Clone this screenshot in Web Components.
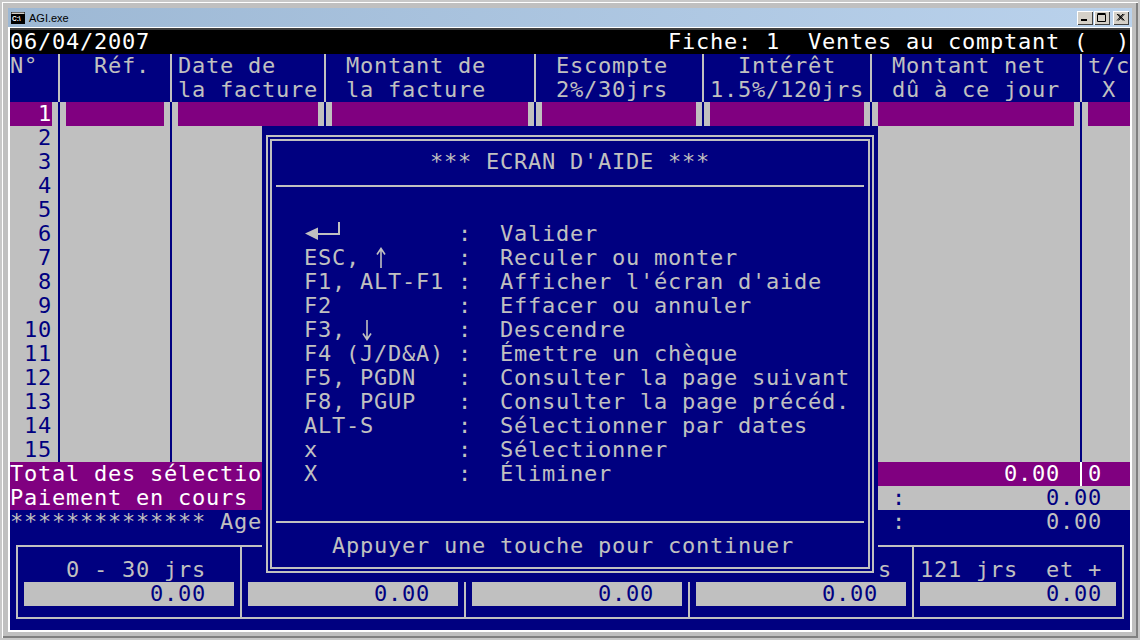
<!DOCTYPE html>
<html lang="fr">
<head>
<meta charset="utf-8">
<title>AGI.exe</title>
<style>
  html, body { margin: 0; padding: 0; background: #c0c0c0; }
</style>
</head>
<body>
<dos-window caption="AGI.exe">
  <dos-console>
    <con-line tone="black">
      <span>06/04/2007</span>
      <span slot="right">Fiche: 1  Ventes au comptant (  )</span>
    </con-line>
    <ledger-table></ledger-table>
    <con-line tone="purple">
      <span>Total des sélectio</span>
      <span slot="right">0.00 </span>
      <con-sep slot="right"></con-sep>
      <span slot="right">0  </span>
    </con-line>
    <con-line tone="grey">
      <con-block>Paiement en cours</con-block>
      <span slot="right">:          0.00  </span>
    </con-line>
    <con-line tone="navy">
      <span>************** Age</span>
      <span slot="right">:          0.00  </span>
    </con-line>
    <age-table></age-table>
    <help-dialog></help-dialog>
  </dos-console>
</dos-window>

<script>
// Outer Windows frame with the title bar
class DosWindow extends HTMLElement {
  constructor() {
    super();
    this.attachShadow({ mode: "open" });
    this.shadowRoot.innerHTML = `
      <style>
        :host {
          display: block;
          box-sizing: border-box;
          width: 1140px;
          height: 640px;
          padding: 6px;
          border: 2px solid #c8c8c8;
          background: #c0c0c0;
          box-shadow: inset 1px 1px 0 #fff, inset -2px -2px 0 #808080;
          font: 11px "Liberation Sans", sans-serif;
        }
        .bar {
          display: flex;
          align-items: center;
          height: 19px;
          padding: 0 3px;
          background: linear-gradient(90deg, #9db8d4, #bad2ec);
          color: #000;
        }
        .bar svg.app { margin-right: 4px; }
        .bar span { flex: 1; }
        .btns { display: flex; }
        .btns button {
          box-sizing: border-box;
          width: 16px;
          height: 14px;
          padding: 0;
          border: 0;
          background: #d4d0c8;
          box-shadow: inset 1px 1px 0 #fff, inset -1px -1px 0 #404040;
          display: flex;
          align-items: center;
          justify-content: center;
        }
        .btns button + button { margin-left: 1px; }
        .btns button:last-child { margin-left: 3px; }
        .client {
          box-sizing: border-box;
          height: 605px;
          padding-top: 2px;
          border: 2px solid #fff;
          border-top-width: 1px;
          background: #404040;
        }
      </style>
      <div class="bar">
        <svg class="app" width="14" height="12" viewBox="0 0 14 12">
          <rect width="14" height="12" fill="#000"/>
          <rect x="0.5" y="0.5" width="13" height="1.5" fill="#d4d0c8"/>
          <text x="1" y="9" font-family="Liberation Sans" font-size="6.5" font-weight="700" fill="#fff">C:\\</text>
        </svg>
        <span></span>
        <div class="btns">
          <button><svg width="10" height="9" viewBox="0 0 10 9"><rect x="1" y="6" width="6" height="2" fill="#000"/></svg></button>
          <button><svg width="10" height="9" viewBox="0 0 10 9"><path d="M.5 1.5h8v7h-8z M.5.5h8" fill="none" stroke="#000"/></svg></button>
          <button><svg width="10" height="9" viewBox="0 0 10 9"><path d="M1 1l6 6.5M2.4 1l6 6.5M7 1L1 7.5M8.4 1l-6 6.5" fill="none" stroke="#000"/></svg></button>
        </div>
      </div>
      <div class="client"><slot></slot></div>
    `;
  }

  connectedCallback() {
    this.shadowRoot.querySelector(".bar span").textContent = this.getAttribute("caption");
  }
}

// 80x25 text screen, each cell is 14x24
class DosConsole extends HTMLElement {
  constructor() {
    super();
    this.attachShadow({ mode: "open" });
    this.shadowRoot.innerHTML = `
      <style>
        :host {
          display: block;
          position: relative;
          width: 1120px;
          height: 600px;
          background: #000080;
          color: #c0c0c0;
          font: 22px/24px "DejaVu Sans Mono", monospace;
          letter-spacing: 0.756px;
          overflow: hidden;
        }
      </style>
      <slot></slot>
    `;
  }
}

// One text line, left part and right part
class ConLine extends HTMLElement {
  constructor() {
    super();
    this.attachShadow({ mode: "open" });
    this.shadowRoot.innerHTML = `
      <style>
        :host {
          display: flex;
          justify-content: space-between;
          height: 24px;
        }
        :host([tone="black"]) { background: #000; color: #fff; }
        :host([tone="purple"]) { background: #800080; color: #fff; }
        :host([tone="grey"]) { background: #c0c0c0; color: #000080; }
        :host([tone="navy"]) { background: #000080; color: #c0c0c0; }
        .right { display: flex; }
        ::slotted(span) { white-space: pre; }
      </style>
      <div class="left"><slot></slot></div>
      <div class="right"><slot name="right"></slot></div>
    `;
  }
}

// Purple block on a grey line (18 columns)
class ConBlock extends HTMLElement {
  constructor() {
    super();
    this.attachShadow({ mode: "open" });
    this.shadowRoot.innerHTML = `
      <style>
        :host {
          display: block;
          width: 252px;
          height: 24px;
          background: #800080;
          color: #fff;
        }
      </style>
      <slot></slot>
    `;
  }
}

// Box drawing vertical bar, takes the width of one character
class ConSep extends HTMLElement {
  constructor() {
    super();
    this.attachShadow({ mode: "open" });
    this.shadowRoot.innerHTML = `
      <style>
        :host {
          display: block;
          width: 14px;
          height: 24px;
          background: linear-gradient(currentColor, currentColor) center / 2px 100% no-repeat;
        }
      </style>
    `;
  }
}

// One row of the invoice table, cells are separated with | in the attribute
class LedgerRow extends HTMLElement {
  constructor() {
    super();
    this.attachShadow({ mode: "open" });
  }

  connectedCallback() {
    const cells = this.getAttribute("cells").split("|");
    const parts = cells.map((text, i) => {
      const sep = i < cells.length - 1 ? "<con-sep></con-sep>" : "";
      return `<div class="cell">${text}</div>${sep}`;
    });
    this.shadowRoot.innerHTML = `
      <style>
        :host {
          display: grid;
          grid-template-columns: 42px 14px 98px 14px 140px 14px 196px 14px 154px 14px 154px 14px 196px 14px 42px;
          height: 24px;
          background: #c0c0c0;
          color: #000080;
        }
        .cell { white-space: pre; }
        :host([tone="head"]) { background: #000080; color: #c0c0c0; }
        :host([tone="sel"]) con-sep { color: #000080; }
        :host([tone="sel"]) .cell { background: #800080; color: #fff; }
      </style>
      ${parts.join("")}
    `;
  }
}

// Invoice table: header and the 15 lines
class LedgerTable extends HTMLElement {
  constructor() {
    super();
    this.attachShadow({ mode: "open" });
    const head = `
      <ledger-row tone="head" cells="N°|  Réf.|Date de| Montant de| Escompte|  Intérêt| Montant net|t/c"></ledger-row>
      <ledger-row tone="head" cells="||la facture| la facture| 2%/30jrs|1.5%/120jrs| dû à ce jour| X"></ledger-row>
      <ledger-row tone="sel" cells="  1|||||||"></ledger-row>
    `;
    let body = "";
    for (let n = 2; n <= 15; n++) {
      body += `<ledger-row cells="${String(n).padStart(3, " ")}|||||||"></ledger-row>`;
    }
    this.shadowRoot.innerHTML = `<style>:host { display: block; }</style>${head}${body}`;
  }
}

// Aging boxes at the bottom of the screen
class AgeTable extends HTMLElement {
  constructor() {
    super();
    this.attachShadow({ mode: "open" });
    const labels = [
      ["0 - 30 jrs", 48, "0.00  "],
      ["", 6, "0.00  "],
      ["", 6, "0.00  "],
      ["s", 188, "0.00  "],
      ["121 jrs  et +", 6, "0.00 "],
    ];
    const cells = labels.map(([label, pad, value]) => `
      <div class="cell">
        <div class="label" style="padding-left:${pad}px">${label}</div>
        <div class="value">${value}</div>
      </div>`).join("");
    this.shadowRoot.innerHTML = `
      <style>
        :host {
          display: grid;
          grid-template-columns: repeat(4, 224px) 1fr;
          box-sizing: border-box;
          height: 74px;
          margin: 11px 6px;
          border: 2px solid #c0c0c0;
        }
        .cell { box-sizing: border-box; padding-top: 11px; border-right: 2px solid #c0c0c0; }
        .cell:last-child { border-right: 0; }
        .label { height: 24px; white-space: pre; }
        .value {
          margin-left: 6px;
          width: 210px;
          height: 24px;
          background: #c0c0c0;
          color: #000080;
          text-align: right;
          white-space: pre;
        }
        .cell:last-child .value { width: 196px; }
      </style>
      ${cells}
    `;
  }
}

// Help popup lying over the table
class HelpDialog extends HTMLElement {
  constructor() {
    super();
    this.attachShadow({ mode: "open" });
    const enter = `<svg width="36" height="24" viewBox="0 0 36 24"><path d="M1 11.5L14 5.5V18z" fill="#c0c0c0"/><path d="M14 12h21V0" fill="none" stroke="#c0c0c0" stroke-width="2"/></svg>`;
    const arrow = (d) => `<svg class="arrow" width="14" height="24" viewBox="0 0 14 24"><path d="${d}" fill="none" stroke="#c0c0c0" stroke-width="1.6"/></svg>`;
    const up = `ESC, ${arrow("M7 22V3M3 8.5L7 2.5l4 6")}`;
    const down = `F3, ${arrow("M7 2V21M3 15.5L7 21.5l4-6")}`;
    const items = [
      [enter, "Valider"],
      [up, "Reculer ou monter"],
      ["F1, ALT-F1", "Afficher l'écran d'aide"],
      ["F2", "Effacer ou annuler"],
      [down, "Descendre"],
      ["F4 (J/D&amp;A)", "Émettre un chèque"],
      ["F5, PGDN", "Consulter la page suivant"],
      ["F8, PGUP", "Consulter la page précéd."],
      ["ALT-S", "Sélectionner par dates"],
      ["x", "Sélectionner"],
      ["X", "Éliminer"],
    ];
    const rows = items.map(([key, text]) =>
      `<div>${key}</div><div>:</div><div>${text}</div>`).join("");
    this.shadowRoot.innerHTML = `
      <style>
        :host {
          position: absolute;
          left: 252px;
          top: 96px;
          box-sizing: border-box;
          width: 616px;
          height: 456px;
          padding: 9px 4px;
          background: #000080;
          color: #c0c0c0;
        }
        .frame {
          display: flex;
          flex-direction: column;
          box-sizing: border-box;
          height: 100%;
          padding: 9px 4px 9px;
          border: 6px double #c0c0c0;
        }
        .title { height: 24px; padding-left: 154px; white-space: pre; }
        hr { width: 100%; height: 2px; margin: 11px 0; border: 0; background: #c0c0c0; flex: none; box-sizing: border-box; }
        .keys {
          display: grid;
          grid-template-columns: 154px 42px 1fr;
          grid-auto-rows: 24px;
          padding: 24px 0 0 28px;
          flex: 1;
          white-space: pre;
        }
        .keys svg { display: block; }
        .keys svg.arrow { display: inline-block; vertical-align: top; }
        .foot { height: 24px; padding-left: 56px; white-space: pre; }
      </style>
      <div class="frame">
        <div class="title">*** ECRAN D'AIDE ***</div>
        <hr>
        <div class="keys">${rows}</div>
        <hr>
        <div class="foot">Appuyer une touche pour continuer</div>
      </div>
    `;
  }
}

// Register the custom elements
customElements.define("dos-window", DosWindow);
customElements.define("dos-console", DosConsole);
customElements.define("con-line", ConLine);
customElements.define("con-block", ConBlock);
customElements.define("con-sep", ConSep);
customElements.define("ledger-row", LedgerRow);
customElements.define("ledger-table", LedgerTable);
customElements.define("age-table", AgeTable);
customElements.define("help-dialog", HelpDialog);
</script>
</body>
</html>
